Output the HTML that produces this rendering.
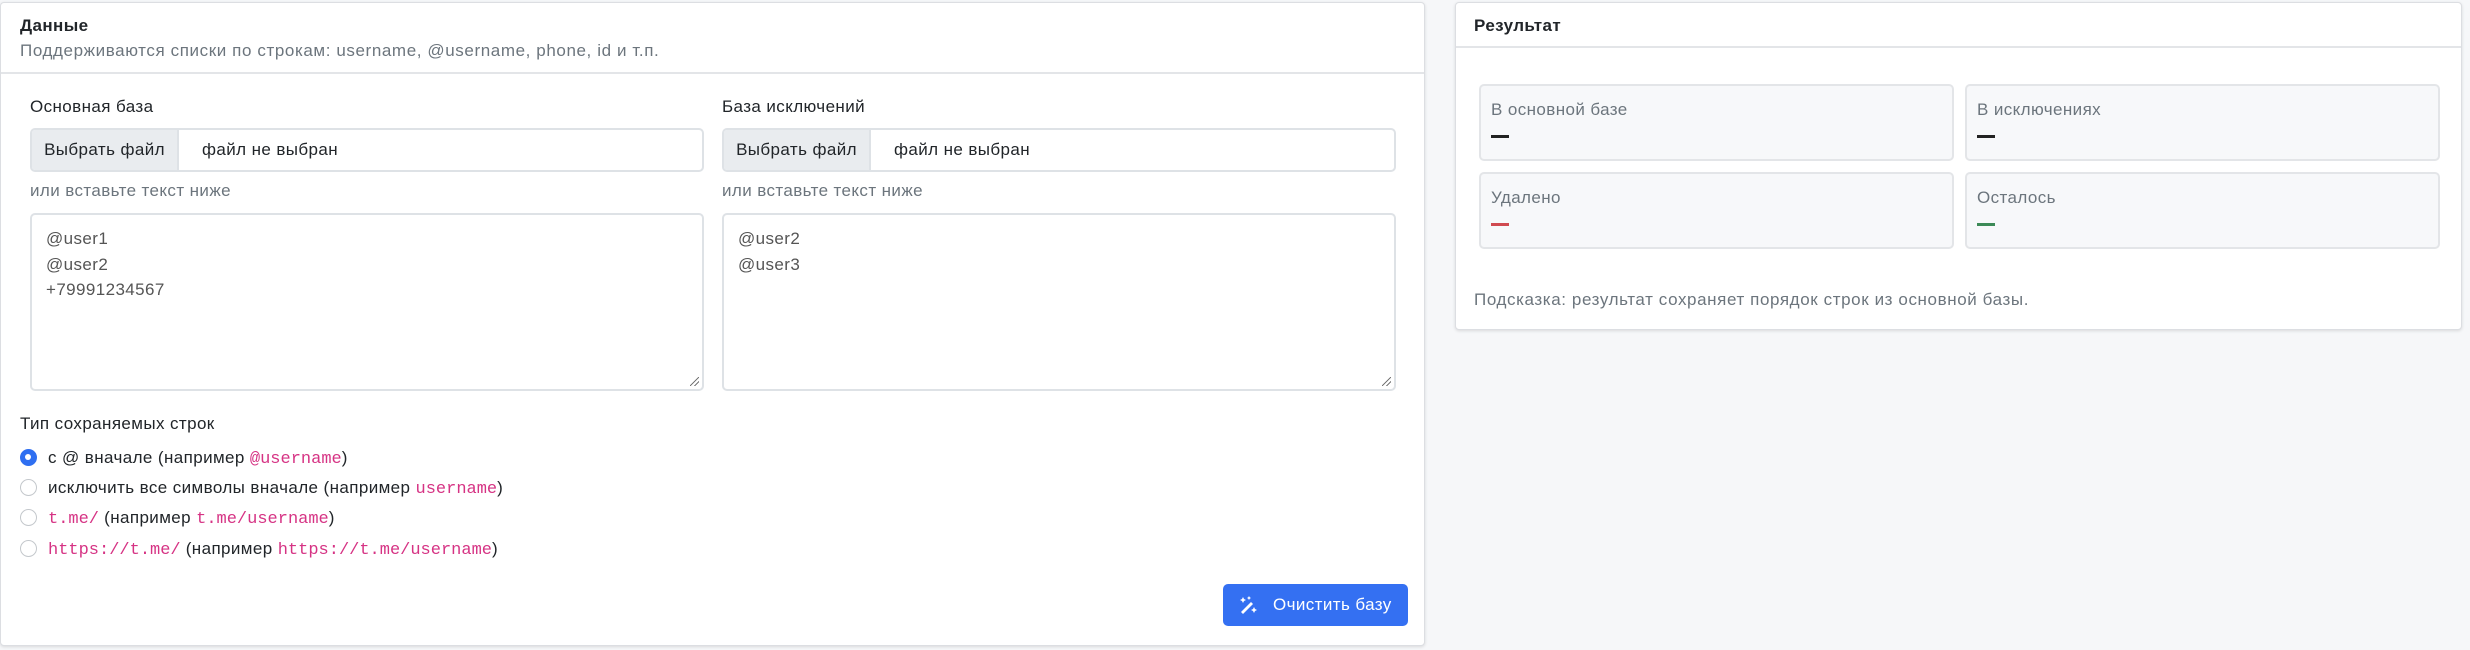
<!DOCTYPE html>
<html><head><meta charset="utf-8"><style>
*{box-sizing:border-box;margin:0;padding:0}
body{width:2470px;height:650px;background:#f6f7f9;font-family:"Liberation Sans","DejaVu Sans",sans-serif;color:#212529;font-size:17px;letter-spacing:.4px;position:relative;overflow:hidden}
.card{position:absolute;background:#fff;border:1px solid #dcdee2;border-radius:4px;box-shadow:0 1px 3px rgba(0,0,0,.12)}
.hdr{position:absolute;left:0;right:0;top:0;border-bottom:2px solid #e3e5e8}
.a{position:absolute;white-space:nowrap}
.muted{color:#6c757d}
.file{position:absolute;height:44px;border:2px solid #dee2e6;border-radius:5px;background:#fff;overflow:hidden}
.file .b{position:absolute;left:0;top:0;bottom:0;width:147px;background:#e9ecef;border-right:2px solid #dee2e6;line-height:40px;text-align:center}
.file .t{position:absolute;left:170px;top:0;line-height:40px}
.ta{position:absolute;height:178px;border:2px solid #dee2e6;border-radius:5px;padding:11px 14px;line-height:25.5px;color:#555}
.ta:after{content:"";position:absolute;right:3px;bottom:3px;width:9px;height:9px;background:linear-gradient(135deg,transparent 45%,#777 45%,#777 55%,transparent 55%,transparent 70%,#777 70%,#777 80%,transparent 80%)}
code{font-family:"Liberation Mono","DejaVu Sans Mono",monospace;color:#d63384;font-size:17px;letter-spacing:0}
.r{position:absolute;left:19px;width:17px;height:17px;border:1.5px solid #c4c8cc;border-radius:50%;background:#fff}
.r.on{background:#2f6ff1;border-color:#2f6ff1}
.r.on:after{content:"";position:absolute;left:4px;top:4px;width:6px;height:6px;border-radius:50%;background:#fff}
.stat{position:absolute;width:475px;height:77px;background:#f7f8fa;border:2px solid #e3e5e8;border-radius:5px}
.stat .l{position:absolute;left:10px;top:14px;color:#6c757d}
.stat .d{position:absolute;left:10px;top:49px;width:18px;height:3px;background:#222}
</style></head><body>
<div class="card" style="left:0;top:2px;width:1425px;height:644px">
 <div class="hdr" style="height:71px"></div>
 <div class="a" style="left:19px;top:13px;font-weight:bold">Данные</div>
 <div class="a muted" style="left:19px;top:38px;letter-spacing:.6px">Поддерживаются списки по строкам: username, @username, phone, id и т.п.</div>

 <div class="a" style="left:29px;top:94px">Основная база</div>
 <div class="file" style="left:29px;top:125px;width:674px"><div class="b">Выбрать файл</div><div class="t">файл не выбран</div></div>
 <div class="a muted" style="left:29px;top:178px">или вставьте текст ниже</div>
 <div class="ta" style="left:29px;top:210px;width:674px">@user1<br>@user2<br>+79991234567</div>

 <div class="a" style="left:721px;top:94px">База исключений</div>
 <div class="file" style="left:721px;top:125px;width:674px"><div class="b">Выбрать файл</div><div class="t">файл не выбран</div></div>
 <div class="a muted" style="left:721px;top:178px">или вставьте текст ниже</div>
 <div class="ta" style="left:721px;top:210px;width:674px">@user2<br>@user3</div>

 <div class="a" style="left:19px;top:411px">Тип сохраняемых строк</div>
 <div class="r on" style="top:446px"></div><div class="a" style="left:47px;top:445px">с @ вначале (например <code>@username</code>)</div>
 <div class="r" style="top:476px"></div><div class="a" style="left:47px;top:475px">исключить все символы вначале (например <code>username</code>)</div>
 <div class="r" style="top:506px"></div><div class="a" style="left:47px;top:505px"><code>t.me/</code> (например <code>t.me/username</code>)</div>
 <div class="r" style="top:537px"></div><div class="a" style="left:47px;top:536px"><code>https://t.me/</code> (например <code>https://t.me/username</code>)</div>

 <div class="a" style="left:1222px;top:581px;width:185px;height:42px;background:#3470f2;border-radius:5px;color:#fff;line-height:42px;padding-left:50px">Очистить базу
  <svg style="position:absolute;left:15px;top:11px" width="20" height="20" viewBox="0 0 20 20" fill="#fff"><path d="M3 17 L13 7 L15 9 L5 19 Z"/><path d="M5 2 l1 2 2 1 -2 1 -1 2 -1 -2 -2 -1 2 -1z"/><path d="M11 1 l.7 1.3 1.3.7 -1.3.7 -.7 1.3 -.7 -1.3 -1.3 -.7 1.3 -.7z"/><path d="M16 12 l1 2 2 1 -2 1 -1 2 -1 -2 -2 -1 2 -1z"/></svg>
 </div>
</div>

<div class="card" style="left:1455px;top:2px;width:1007px;height:328px">
 <div class="hdr" style="height:45px"></div>
 <div class="a" style="left:18px;top:13px;font-weight:bold">Результат</div>
 <div class="stat" style="left:23px;top:81px"><div class="l">В основной базе</div><div class="d"></div></div>
 <div class="stat" style="left:509px;top:81px"><div class="l">В исключениях</div><div class="d"></div></div>
 <div class="stat" style="left:23px;top:169px"><div class="l">Удалено</div><div class="d" style="background:#d04a50"></div></div>
 <div class="stat" style="left:509px;top:169px"><div class="l">Осталось</div><div class="d" style="background:#3c8a57"></div></div>
 <div class="a muted" style="left:18px;top:287px;letter-spacing:.6px">Подсказка: результат сохраняет порядок строк из основной базы.</div>
</div>
</body></html>
